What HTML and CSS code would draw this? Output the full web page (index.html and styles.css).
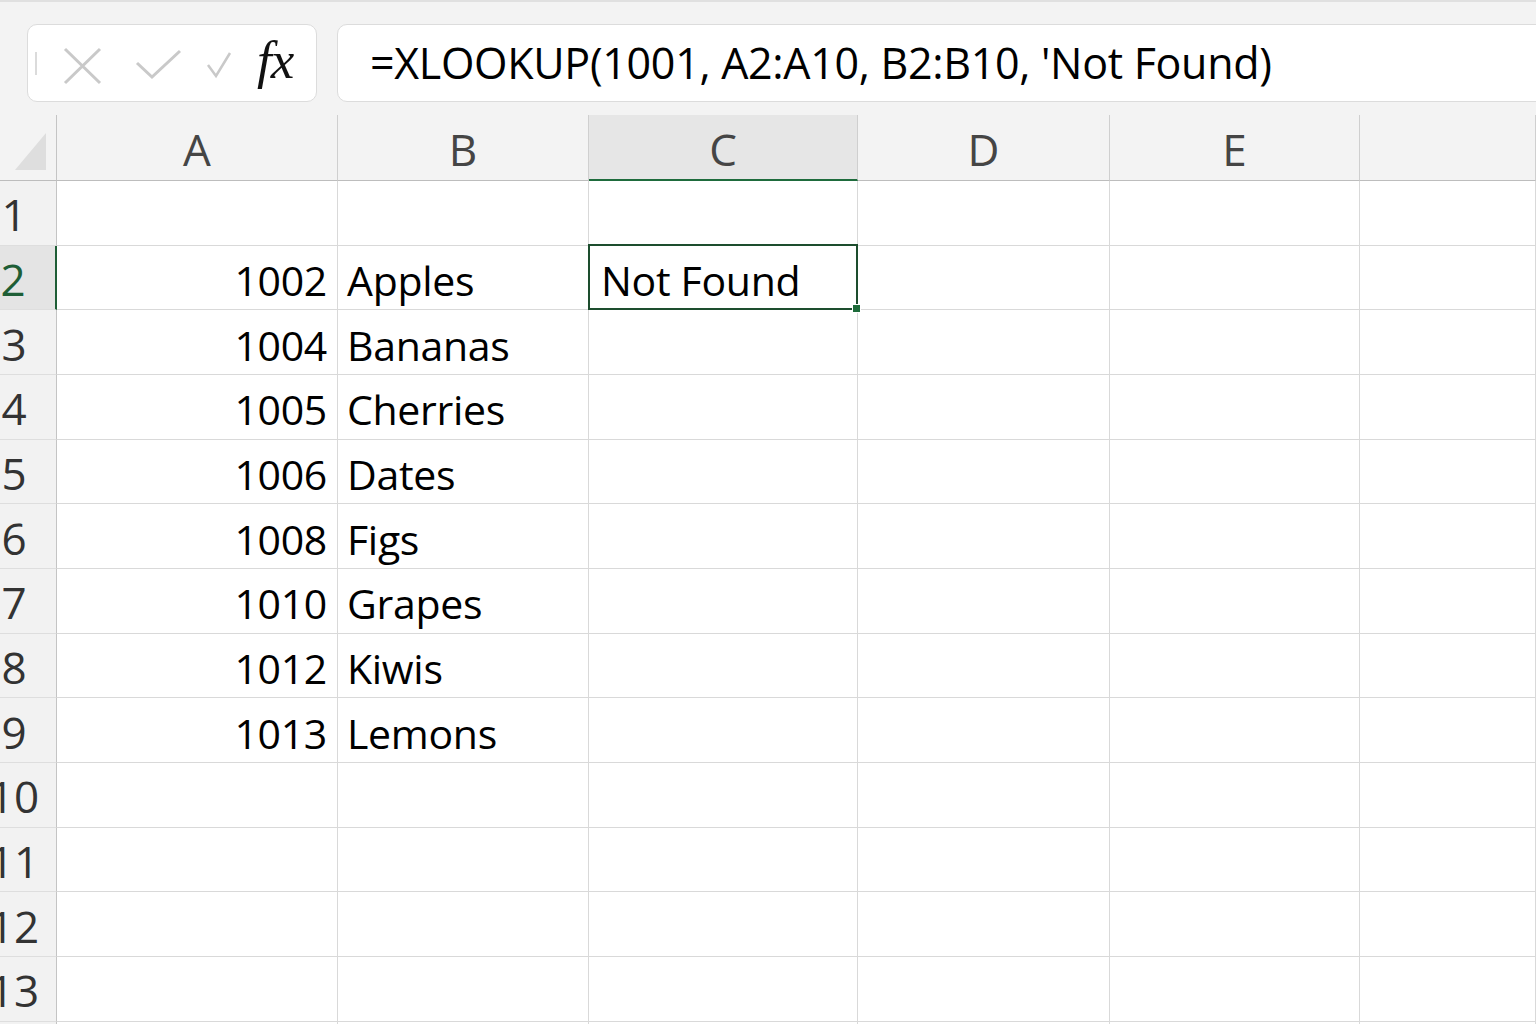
FILE: index.html
```html
<!DOCTYPE html>
<html lang="en">
<head>
    <meta charset="UTF-8">
    <meta name="viewport" content="width=device-width, initial-scale=1.0">
    <title>Book1 - Excel</title>
    <link rel="stylesheet" href="styles.css">
</head>
<body>
    <!-- Barra de fórmulas -->
    <div class="formula-bar">
        <div class="name-box">
            <svg class="bar-icons" width="220" height="76" viewBox="0 0 220 76">
                <line x1="8" y1="27" x2="8" y2="50" stroke="#cfcfcf" stroke-width="1.5"/>
                <path d="M37 24 L72 58 M72 24 L37 58" stroke="#c9c9c9" stroke-width="3" fill="none"/>
                <path d="M109 38 L124 52 L152 26" stroke="#c9c9c9" stroke-width="3" fill="none"/>
                <path d="M180 40 L188 51 L202 28" stroke="#c9c9c9" stroke-width="2.5" fill="none"/>
            </svg>
            <span class="fx">fx</span>
        </div>
        <div class="formula-box">=XLOOKUP(1001, A2:A10, B2:B10, 'Not Found)</div>
    </div>

    <!-- Planilha -->
    <div class="sheet">
        <div class="row head-row">
            <div class="corner"><span class="triangle"></span></div>
            <div class="col-head">A</div>
            <div class="col-head">B</div>
            <div class="col-head sel">C</div>
            <div class="col-head">D</div>
            <div class="col-head">E</div>
            <div class="col-head"></div>
        </div>
        <div class="row">
            <div class="row-head">1</div>
            <div class="cell"></div><div class="cell"></div><div class="cell"></div><div class="cell"></div><div class="cell"></div><div class="cell"></div>
        </div>
        <div class="row">
            <div class="row-head sel">2</div>
            <div class="cell num">1002</div><div class="cell">Apples</div><div class="cell active">Not Found</div><div class="cell"></div><div class="cell"></div><div class="cell"></div>
        </div>
        <div class="row">
            <div class="row-head">3</div>
            <div class="cell num">1004</div><div class="cell">Bananas</div><div class="cell"></div><div class="cell"></div><div class="cell"></div><div class="cell"></div>
        </div>
        <div class="row">
            <div class="row-head">4</div>
            <div class="cell num">1005</div><div class="cell">Cherries</div><div class="cell"></div><div class="cell"></div><div class="cell"></div><div class="cell"></div>
        </div>
        <div class="row">
            <div class="row-head">5</div>
            <div class="cell num">1006</div><div class="cell">Dates</div><div class="cell"></div><div class="cell"></div><div class="cell"></div><div class="cell"></div>
        </div>
        <div class="row">
            <div class="row-head">6</div>
            <div class="cell num">1008</div><div class="cell">Figs</div><div class="cell"></div><div class="cell"></div><div class="cell"></div><div class="cell"></div>
        </div>
        <div class="row">
            <div class="row-head">7</div>
            <div class="cell num">1010</div><div class="cell">Grapes</div><div class="cell"></div><div class="cell"></div><div class="cell"></div><div class="cell"></div>
        </div>
        <div class="row">
            <div class="row-head">8</div>
            <div class="cell num">1012</div><div class="cell">Kiwis</div><div class="cell"></div><div class="cell"></div><div class="cell"></div><div class="cell"></div>
        </div>
        <div class="row">
            <div class="row-head">9</div>
            <div class="cell num">1013</div><div class="cell">Lemons</div><div class="cell"></div><div class="cell"></div><div class="cell"></div><div class="cell"></div>
        </div>
        <div class="row">
            <div class="row-head">10</div>
            <div class="cell"></div><div class="cell"></div><div class="cell"></div><div class="cell"></div><div class="cell"></div><div class="cell"></div>
        </div>
        <div class="row">
            <div class="row-head">11</div>
            <div class="cell"></div><div class="cell"></div><div class="cell"></div><div class="cell"></div><div class="cell"></div><div class="cell"></div>
        </div>
        <div class="row">
            <div class="row-head">12</div>
            <div class="cell"></div><div class="cell"></div><div class="cell"></div><div class="cell"></div><div class="cell"></div><div class="cell"></div>
        </div>
        <div class="row">
            <div class="row-head">13</div>
            <div class="cell"></div><div class="cell"></div><div class="cell"></div><div class="cell"></div><div class="cell"></div><div class="cell"></div>
        </div>
        <div class="row">
            <div class="row-head"></div>
            <div class="cell"></div><div class="cell"></div><div class="cell"></div><div class="cell"></div><div class="cell"></div><div class="cell"></div>
        </div>
    </div>
</body>
</html>
```

FILE: styles.css
```css
html, body {
    height: 100%;
}
body {
    margin: 0;
    background-color: #f3f3f3;
    font-family: "Open Sans", "Noto Sans", sans-serif;
    overflow: hidden;
    border-top: 2px solid #e0e0e0;
    box-sizing: border-box;
}
/* Barra de fórmulas */
.formula-bar {
    display: flex;
    gap: 20px;
    padding: 22px 0 0 27px;
    margin-right: -30px;
}
.name-box {
    width: 290px;
    height: 78px;
    box-sizing: border-box;
    background-color: #fff;
    border: 1px solid #dcdcdc;
    border-radius: 10px;
    display: flex;
    align-items: center;
}
.bar-icons {
    flex: none;
}
.fx {
    font-family: "Liberation Serif", serif;
    font-style: italic;
    font-size: 53px;
    color: #111;
    margin-left: 9px;
    margin-top: -6px;
    letter-spacing: -1px;
}
.formula-box {
    flex: 1;
    height: 78px;
    box-sizing: border-box;
    background-color: #fff;
    border: 1px solid #dcdcdc;
    border-radius: 10px;
    display: flex;
    align-items: center;
    padding: 0 0 2px 32px;
    font-size: 43px;
    letter-spacing: -0.3px;
    color: #000;
    white-space: nowrap;
}
/* Planilha */
.sheet {
    margin-top: 1px;
}
.row {
    display: grid;
    grid-template-columns: 57px 281px 251px 269px 252px 250px 1fr;
    height: 64.67px;
    box-sizing: border-box;
}
.head-row {
    height: 78px;
    padding-top: 12px;
}
.corner {
    border-right: 1px solid #c4c4c4;
    border-bottom: 1px solid #bdbdbd;
    display: flex;
    align-items: flex-end;
    padding: 0 0 10px 15px;
}
.triangle {
    width: 0;
    height: 0;
    border-left: 31px solid transparent;
    border-bottom: 37px solid #dedede;
}
.col-head {
    border-right: 1px solid #cfcfcf;
    border-bottom: 1px solid #bdbdbd;
    display: flex;
    align-items: center;
    justify-content: center;
    font-size: 44px;
    color: #454545;
    padding-top: 3px;
}
.col-head.sel {
    background-color: #e6e6e6;
    border-bottom: 2px solid #1e6b3c;
}
.row-head {
    background-color: #f2f2f2;
    border-right: 1px solid #c4c4c4;
    border-bottom: 1px solid #dedede;
    display: flex;
    align-items: center;
    justify-content: center;
    padding-right: 28px;
    padding-top: 3px;
    font-size: 44px;
    color: #333;
    white-space: nowrap;
}
.row-head.sel {
    background-color: #e4e4e4;
    color: #1e5e36;
    border-right: 2px solid #1e5e36;
    padding-right: 29px;
}
.cell {
    background-color: #fff;
    border-right: 1px solid #d9d9d9;
    border-bottom: 1px solid #d9d9d9;
    display: flex;
    align-items: center;
    padding: 5px 10px 0 9px;
    font-size: 41px;
    letter-spacing: -0.3px;
    color: #000;
    white-space: nowrap;
}
.cell.num {
    justify-content: flex-end;
}
.cell.active {
    position: relative;
    padding-left: 12px;
}
.cell.active::after {
    content: "";
    position: absolute;
    top: -2px;
    left: -1px;
    right: -1px;
    bottom: -1px;
    border: 2px solid #1d4d2e;
}
.cell.active::before {
    content: "";
    position: absolute;
    right: -4px;
    bottom: -4px;
    width: 7px;
    height: 7px;
    background-color: #1d6b3a;
    border: 1px solid #fff;
    z-index: 1;
}
```
